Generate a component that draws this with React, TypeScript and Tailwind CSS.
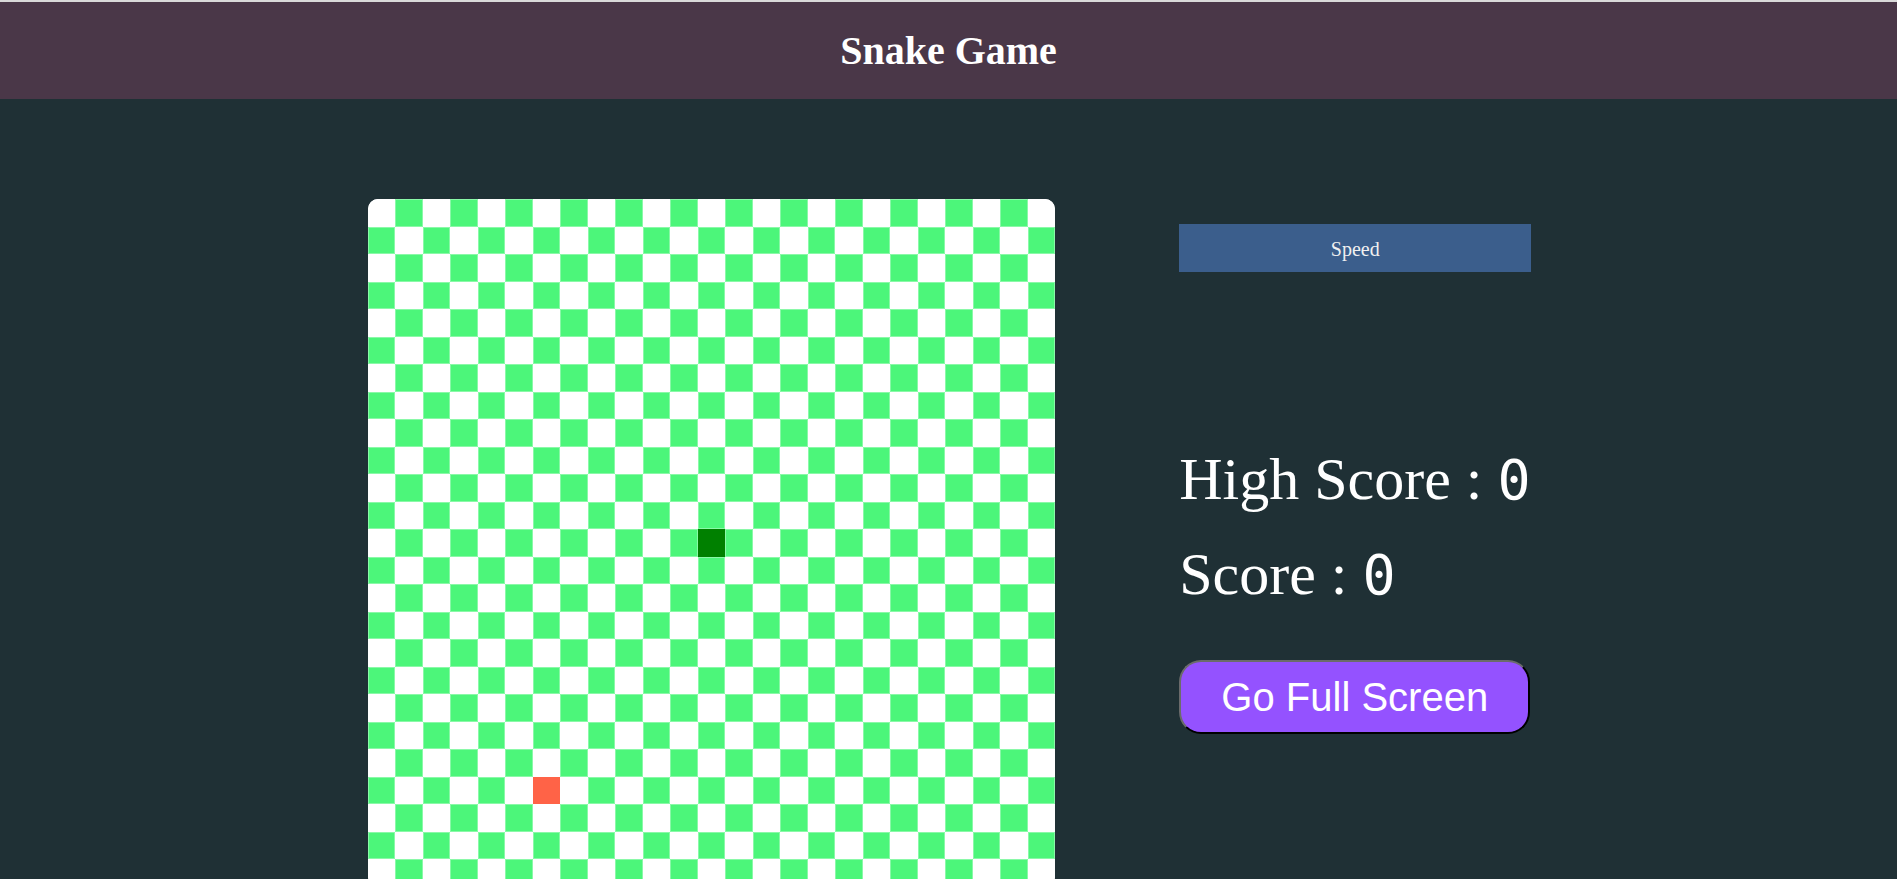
const SIZE = 25;
const snake = [{ x: 12, y: 12 }];
const food = { x: 6, y: 21 };

function cellClass(x: number, y: number) {
  if (snake.some((s) => s.x === x && s.y === y)) return 'bg-[#008000]';
  if (food.x === x && food.y === y) return 'bg-[#ff6347]';
  return (x + y) % 2 === 0
    ? 'bg-white'
    : 'bg-[#4cf67a] shadow-[inset_0_0_0_1px_rgba(255,255,255,0.35)]';
}

function Board() {
  const cells = [];
  for (let y = 0; y < SIZE; y++) {
    for (let x = 0; x < SIZE; x++) {
      cells.push(<div key={`${x}-${y}`} className={cellClass(x, y)} />);
    }
  }
  return (
    <div className="grid shrink-0 grid-cols-[repeat(25,27.5px)] grid-rows-[repeat(25,27.5px)] overflow-hidden rounded-[10px] bg-white">
      {cells}
    </div>
  );
}

export default function App() {
  return (
    <div className="min-h-screen bg-[#1f3035] font-['Liberation_Serif',serif]">
      <div className="h-[2px] bg-[#d9d9d9]" />
      <header className="flex h-[97px] items-center justify-center bg-[#4a3748]">
        <h1 className="text-[40px] font-bold leading-none text-white">Snake Game</h1>
      </header>

      <main className="ml-[2px] flex justify-center gap-[124px] pt-[100px]">
        <Board />

        <div className="flex w-[352px] flex-col pt-[25px]">
          <div className="flex h-[48px] items-center justify-center bg-[#3b5e8c] pt-[2px] text-[20px] text-[#f0f0f0]">
            Speed
          </div>

          <p className="mt-[174px] whitespace-nowrap text-[60px] leading-[66px] text-white">
            High Score :{' '}
            <span className="font-['DejaVu_Sans_Mono',monospace] text-[55px]">0</span>
          </p>
          <p className="mt-[28px] whitespace-nowrap text-[60px] leading-[66px] text-white">
            Score : <span className="font-['DejaVu_Sans_Mono',monospace] text-[55px]">0</span>
          </p>

          <button
            type="button"
            className="mt-[52px] h-[74px] w-[351px] rounded-[22px] border-2 border-t-[#6b6b6b] border-l-[#6b6b6b] border-b-black border-r-black bg-[#9452ff] font-['Liberation_Sans',Arial,sans-serif] text-[40px] text-white"
          >
            Go Full Screen
          </button>
        </div>
      </main>
    </div>
  );
}
